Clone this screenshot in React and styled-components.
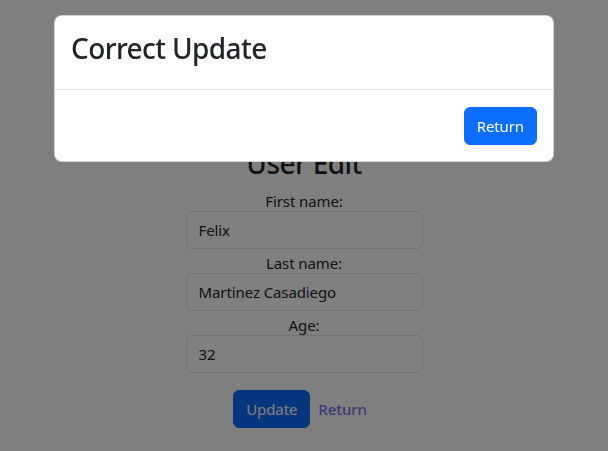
import React from "react";
import styled, { createGlobalStyle } from "styled-components";

const Global = createGlobalStyle`
  html, body { margin: 0; padding: 0; background: #fff; }
  body {
    font-family: "Noto Sans", "Open Sans", sans-serif;
    font-size: 15px;
    letter-spacing: -0.1px;
    line-height: 24px;
    color: #212529;
  }
  * { box-sizing: border-box; }
`;

const Page = styled.main`
  display: flex;
  flex-direction: column;
  align-items: center;
  padding-top: 147px;
  text-align: center;
`;

const PageTitle = styled.h2`
  margin: 0 0 8px;
  font-size: 28px;
  font-weight: 500;
  line-height: 32px;
  letter-spacing: -0.6px;
`;

const Form = styled.form`
  display: flex;
  flex-direction: column;
  align-items: center;
  width: 237px;
`;

const Label = styled.label`
  display: block;
  line-height: 24px;
  padding-top: 2px;
  margin-bottom: -2px;
`;

const Input = styled.input`
  display: block;
  width: 100%;
  height: 38px;
  padding: 6px 12px;
  font: inherit;
  letter-spacing: inherit;
  color: #212529;
  background: #fff;
  border: 1px solid #dee2e6;
  border-radius: 6px;
  outline: none;
`;

const Actions = styled.div`
  display: flex;
  align-items: center;
  gap: 8px;
  margin-top: 17px;
`;

const Button = styled.button`
  display: inline-block;
  height: 38px;
  padding: 6px 12px;
  font: inherit;
  letter-spacing: inherit;
  line-height: 24px;
  color: #fff;
  background: #0d6efd;
  border: 1px solid #0d6efd;
  border-radius: 6px;
  cursor: pointer;
`;

const Link = styled.a`
  margin-right: 8px;
  color: #7a70f5;
  text-decoration: none;
  font-weight: 500;
`;

const Backdrop = styled.div`
  position: fixed;
  inset: 0;
  background: rgba(0, 0, 0, 0.5);
`;

const ModalWrap = styled.div`
  position: fixed;
  inset: 0;
  display: flex;
  justify-content: center;
  align-items: flex-start;
  padding-top: 15px;
`;

const ModalContent = styled.div`
  width: 500px;
  background: #fff;
  border: 1px solid rgba(0, 0, 0, 0.175);
  border-radius: 8px;
  display: flex;
  flex-direction: column;
`;

const ModalHeader = styled.div`
  padding: 12px 16px 20px;
  border-bottom: 1px solid #dee2e6;
`;

const ModalTitle = styled.h2`
  margin: 0;
  font-size: 28px;
  font-weight: 500;
  line-height: 41px;
  letter-spacing: -0.6px;
`;

const ModalFooter = styled.div`
  display: flex;
  justify-content: flex-end;
  padding: 13px 12px 12px;
`;

const FooterButton = styled(Button)`
  margin: 4px;
`;

export default function App() {
  return (
    <>
      <Global />
      <Page>
        <PageTitle>User Edit</PageTitle>
        <Form onSubmit={(e) => e.preventDefault()}>
          <Label>First name:</Label>
          <Input defaultValue="Felix" />
          <Label>Last name:</Label>
          <Input defaultValue="Martinez Casadiego" />
          <Label>Age:</Label>
          <Input defaultValue="32" />
          <Actions>
            <Button type="submit">Update</Button>
            <Link href="#">Return</Link>
          </Actions>
        </Form>
      </Page>
      <Backdrop />
      <ModalWrap>
        <ModalContent>
          <ModalHeader>
            <ModalTitle>Correct Update</ModalTitle>
          </ModalHeader>
          <ModalFooter>
            <FooterButton>Return</FooterButton>
          </ModalFooter>
        </ModalContent>
      </ModalWrap>
    </>
  );
}
